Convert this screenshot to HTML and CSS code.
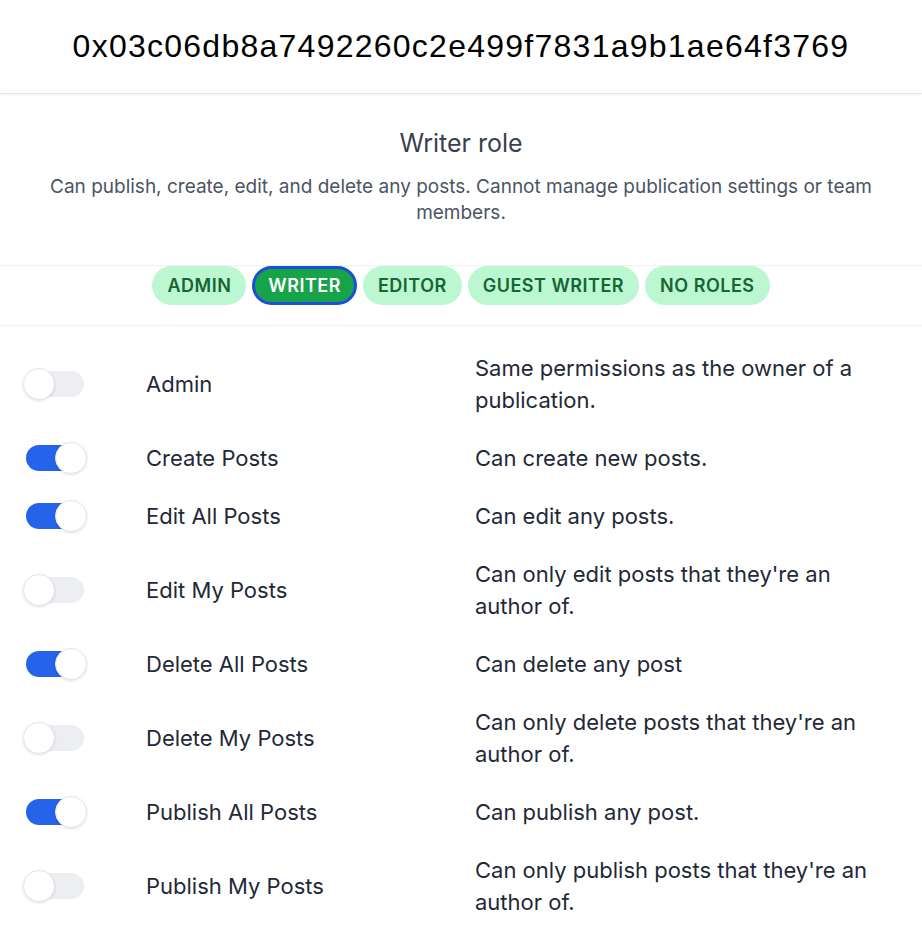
FILE: index.html
```html
<!DOCTYPE html>
<html lang="en">
<head>
    <meta charset="UTF-8">
    <title>Roles</title>
    <link rel="stylesheet" href="styles.css">
</head>
<body>
  <header class="top-bar">
    <div class="address">0x03c06db8a7492260c2e499f7831a9b1ae64f3769</div>
  </header>

  <section class="role-info">
    <div class="role-title">Writer role</div>
    <div class="role-desc">Can publish, create, edit, and delete any posts. Cannot manage publication settings or team members.</div>
  </section>

  <nav class="role-tabs">
    <button class="pill">Admin</button>
    <button class="pill active">Writer</button>
    <button class="pill">Editor</button>
    <button class="pill">Guest Writer</button>
    <button class="pill">No Roles</button>
  </nav>

  <section class="perms">
    <div class="perm">
      <span class="toggle"><span class="knob"></span></span>
      <div class="perm-name">Admin</div>
      <div class="perm-desc">Same permissions as the owner of a publication.</div>
    </div>
    <div class="perm">
      <span class="toggle on"><span class="knob"></span></span>
      <div class="perm-name">Create Posts</div>
      <div class="perm-desc">Can create new posts.</div>
    </div>
    <div class="perm">
      <span class="toggle on"><span class="knob"></span></span>
      <div class="perm-name">Edit All Posts</div>
      <div class="perm-desc">Can edit any posts.</div>
    </div>
    <div class="perm">
      <span class="toggle"><span class="knob"></span></span>
      <div class="perm-name">Edit My Posts</div>
      <div class="perm-desc">Can only edit posts that they're an author of.</div>
    </div>
    <div class="perm">
      <span class="toggle on"><span class="knob"></span></span>
      <div class="perm-name">Delete All Posts</div>
      <div class="perm-desc">Can delete any post</div>
    </div>
    <div class="perm">
      <span class="toggle"><span class="knob"></span></span>
      <div class="perm-name">Delete My Posts</div>
      <div class="perm-desc">Can only delete posts that they're an author of.</div>
    </div>
    <div class="perm">
      <span class="toggle on"><span class="knob"></span></span>
      <div class="perm-name">Publish All Posts</div>
      <div class="perm-desc">Can publish any post.</div>
    </div>
    <div class="perm">
      <span class="toggle"><span class="knob"></span></span>
      <div class="perm-name">Publish My Posts</div>
      <div class="perm-desc">Can only publish posts that they're an author of.</div>
    </div>
  </section>
</body>
</html>
```

FILE: styles.css
```css
html, body {
    margin: 0;
    background: #fff;
    font-family: Inter, "Noto Sans", sans-serif;
    color: #1f2937;
}

.top-bar {
    height: 93px;
    display: flex;
    align-items: center;
    justify-content: center;
    border-bottom: 1px solid #e5e7eb;
    box-shadow: 0 1px 3px rgba(0,0,0,0.06);
}

.address {
    font-family: "Liberation Sans", Arial, sans-serif;
    font-size: 32px;
    letter-spacing: 1.25px;
    color: #000;
}

.role-info {
    padding: 33px 40px 39px;
    text-align: center;
    border-bottom: 1px solid #f0f1f3;
}

.role-title {
    font-size: 25px;
    line-height: 32px;
    color: #374151;
}

.role-desc {
    margin-top: 15px;
    font-size: 19px;
    line-height: 26px;
    color: #4b5563;
}

.role-tabs {
    display: flex;
    justify-content: center;
    gap: 6px;
    padding: 0 0 20px;
    border-bottom: 1px solid #f0f1f3;
}

.pill {
    height: 39px;
    padding: 0 13px;
    border: 2px solid transparent;
    border-radius: 20px;
    background: #bbf7d0;
    color: #166534;
    font-family: Inter, "Noto Sans", sans-serif;
    font-size: 18px;
    font-weight: 600;
    letter-spacing: 0.5px;
    text-transform: uppercase;
    cursor: pointer;
}

.pill.active {
    background: #16a34a;
    color: #fff;
    border: 3px solid #1d4ed8;
}

.perms {
    padding: 13px 24px 0;
}

.perm {
    display: grid;
    grid-template-columns: 122px 329px 1fr;
    align-items: center;
    padding: 13px 0;
    font-size: 22px;
    line-height: 32px;
}

.perm-desc {
    padding-right: 20px;
}

.toggle {
    position: relative;
    display: block;
    width: 60px;
    height: 26px;
    border-radius: 13px;
    background: #eceef1;
}

.toggle.on {
    background: #2563eb;
    margin-left: 2px;
}

.knob {
    position: absolute;
    top: -3px;
    left: -1px;
    width: 30px;
    height: 30px;
    border-radius: 50%;
    background: #fff;
    border: 1px solid #e5e7eb;
    box-shadow: 0 1px 3px rgba(0,0,0,0.12);
}

.toggle.on .knob {
    left: 29px;
}
```
